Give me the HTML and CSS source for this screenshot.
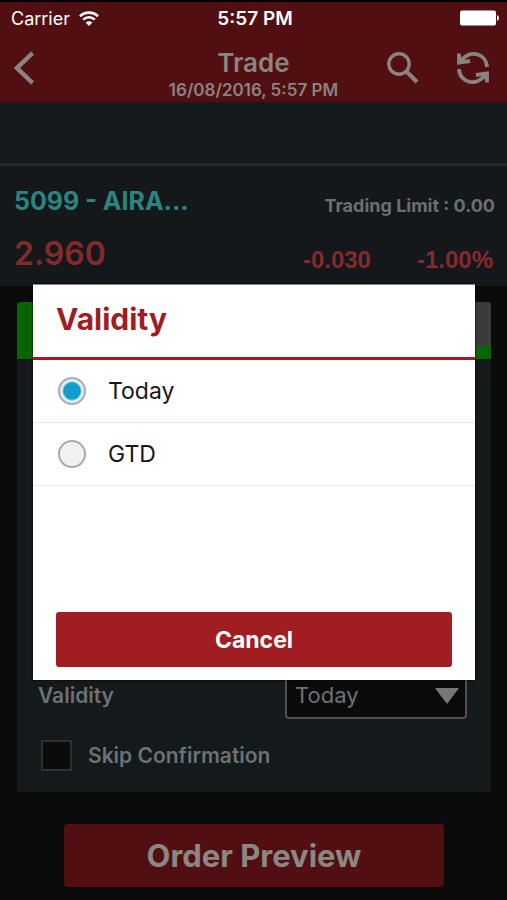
FILE: index.html
```html
<!DOCTYPE html>
<html lang="en">
<head>
<meta charset="utf-8">
<meta name="viewport" content="width=device-width, initial-scale=1">
<title>Trade</title>
<link rel="stylesheet" href="styles.css">
</head>
<body>
<div class="app">
  <header class="header">
    <div class="status">
      <div class="status-left">
        <span>Carrier</span>
        <svg class="wifi" viewBox="0 0 20 15" aria-hidden="true"><path d="M1 5.2C6 .4 14 .4 19 5.2M4.2 8.6c3.4-3.1 8.2-3.1 11.6 0" fill="none" stroke="#fff" stroke-width="2.600"/><path d="M10 15l-3.4-3.6c2-1.7 4.8-1.7 6.8 0z" fill="#fff"/></svg>
      </div>
      <span class="clock">5:57 PM</span>
      <svg class="battery" viewBox="0 0 39 16" aria-hidden="true"><rect x="0" y="0.500" width="36" height="15" rx="2" fill="#fff"/><path d="M37 5c2.600 1 2.600 5 0 6z" fill="#fff"/></svg>
    </div>
    <div class="navbar">
      <button class="icon-button back" aria-label="Back"><svg width="24" height="36" viewBox="0 0 24 36"><path d="M20.500 3L5 18l15.500 15" fill="none" stroke="currentColor" stroke-width="4.500"/></svg></button>
      <div class="heading">
        <h1>Trade</h1>
        <p>16/08/2016, 5:57 PM</p>
      </div>
      <div class="actions">
        <button class="icon-button" aria-label="Search"><svg width="32" height="32" viewBox="0 0 32 32"><circle cx="12" cy="12" r="10.200" fill="none" stroke="currentColor" stroke-width="3.400"/><path d="M19.500 19.500L30 30" stroke="currentColor" stroke-width="4"/></svg></button>
        <button class="icon-button" aria-label="Refresh"><svg width="32" height="32" viewBox="0 0 32 32"><g fill="none" stroke="currentColor" stroke-width="3.800"><path d="M4.500 8.500C11-2 29 0 30 15"/><path d="M27.500 23.500C21 34 3 32 2 17"/><path d="M2 1.500V10.500L13 9M30 30.500V21.500L19 23"/></g><path d="M2 3l7 6-7 3zM30 29l-7-6 7-3z" fill="currentColor"/></svg></button>
      </div>
    </div>
  </header>
  <div class="ticker"></div>
  <section class="quote">
    <div class="quote-row">
      <h2>5099 - AIRA...</h2>
      <span class="limit">Trading Limit : 0.00</span>
    </div>
    <div class="quote-row prices">
      <strong class="price">2.960</strong>
      <div class="changes"><span>-0.030</span><span>-1.00%</span></div>
    </div>
  </section>
  <main class="main">
    <form class="card">
      <div class="tabs"><div class="tab active"></div><div class="tab"></div></div>
      <div class="fields">
        <div class="field">
          <label for="validity">Validity</label>
          <div class="select-box">
            <select id="validity"><option>Today</option><option>GTD</option></select>
            <svg class="arrow" viewBox="0 0 24 16" aria-hidden="true"><path d="M0 0h24L12 16z" fill="currentColor"/></svg>
          </div>
        </div>
        <div class="check">
          <input type="checkbox" id="skip">
          <label for="skip">Skip Confirmation</label>
        </div>
      </div>
    </form>
    <button class="preview">Order Preview</button>
  </main>
  <div class="overlay">
    <div class="dialog" role="dialog" aria-labelledby="dialog-title">
      <h2 id="dialog-title">Validity</h2>
      <label class="option"><input type="radio" name="term" checked><span>Today</span></label>
      <label class="option"><input type="radio" name="term"><span>GTD</span></label>
      <button class="cancel">Cancel</button>
    </div>
  </div>
</div>
</body>
</html>
```
FILE: styles.css
```css
* { box-sizing: border-box; }
body { margin: 0; background: #0b0b0b; font-family: Inter, "Liberation Sans", sans-serif; }
h1, h2, p { margin: 0; }
button { border: 0; padding: 0; font-family: inherit; }
svg { display: block; }

.app { position: relative; display: flex; flex-direction: column; min-height: 100vh; border-top: 2px solid #000; }

.header { background: #520f12; color: #8b8380; height: 100px; }
.status { display: grid; grid-template-columns: 1fr auto 1fr; align-items: center; height: 32px; padding: 0 8px 0 11px; color: #fff; font-size: 18px; }
.status-left { display: flex; align-items: center; gap: 9px; }
.wifi { width: 20px; height: 15px; }
.clock { font-size: 19px; font-weight: 600; }
.battery { width: 39px; height: 16px; justify-self: end; }
.navbar { display: grid; grid-template-columns: 1fr auto 1fr; align-items: center; padding: 0 18px; height: 68px; }
.icon-button { display: flex; background: none; color: inherit; }
.back { margin-left: -6px; }
.heading { display: flex; flex-direction: column; align-items: center; padding-top: 12px; }
.heading h1 { font-size: 26px; line-height: 32px; font-weight: 600; }
.heading p { font-size: 17px; line-height: 22px; font-weight: 600; }
.actions { display: flex; justify-content: flex-end; gap: 38px; }

.ticker { height: 64px; background: #14191c; border-bottom: 3px solid #23282b; }
.quote { height: 120px; padding: 16px 12px 0 14px; background: #14181b; }
.quote-row { display: flex; justify-content: space-between; align-items: center; height: 38px; }
.quote h2 { font-size: 25px; font-weight: 700; color: #2a8582; }
.limit { padding-top: 8px; font-size: 18px; font-weight: 700; color: #6b6f71; }
.prices { height: 66px; color: #842a2c; }
.price { font-size: 32px; font-weight: 600; }
.changes { display: flex; gap: 46px; padding: 14px 2px 0 0; font-family: "Liberation Sans", sans-serif; font-size: 24px; font-weight: 700; }

.main { flex: 1; display: flex; flex-direction: column; gap: 32px; padding: 16px 16px 13px 17px; }
.card { flex: 1; display: flex; flex-direction: column; justify-content: space-between; background: #14191c; }
.tabs { display: grid; grid-template-columns: 1fr 1fr; height: 57px; border-radius: 4px 4px 0 0; overflow: hidden; background: #0b0b0b; }
.tab { background: #3b3b3b; border-bottom: 13px solid #096500; }
.tab.active { background: #096500; }
.fields { padding: 0 24px 21px 21px; font-size: 21px; font-weight: 600; color: #6d7173; }
.field { display: flex; justify-content: space-between; align-items: center; margin-bottom: 21px; }
.select-box { position: relative; width: 182px; }
.select-box select { display: block; appearance: none; width: 100%; height: 48px; padding: 0 8px; border: 2px solid #4d5052; border-radius: 4px; background: #0b0b0b; color: #6d7173; font-family: inherit; font-size: 22px; }
.arrow { position: absolute; right: 8px; top: 17px; width: 24px; height: 16px; color: #777; pointer-events: none; }
.check { display: flex; align-items: center; gap: 16px; padding-left: 3px; }
.check input { appearance: none; width: 31px; height: 31px; margin: 0; border: 2px solid #2c3032; background: #0b0b0b; }
.preview { height: 63px; margin: 0 47px; border-radius: 4px; background: #520f12; color: #8b8785; font-size: 31px; font-weight: 700; }

.overlay { position: absolute; inset: 0; display: flex; justify-content: center; align-items: flex-start; padding: 282px 32px 0 33px; }
.dialog { display: flex; flex-direction: column; width: 100%; min-height: 396px; padding-bottom: 13px; border-top: 1px solid #858789; background: #fff; box-shadow: 0 0 2px #000; }
.dialog h2 { height: 75px; padding: 14px 23px 0; border-bottom: 3px solid #a01d22; color: #a01d22; font-size: 30px; line-height: 40px; font-weight: 700; }
.option { display: flex; align-items: center; gap: 22px; height: 63px; padding: 0 25px; border-bottom: 1px solid #e5e6e7; color: #161616; font-size: 23px; }
.option input { appearance: none; width: 28px; height: 28px; margin: 0; border: 2px solid #a9abac; border-radius: 50%; background: #f2f2f2; }
.option input:checked { background: radial-gradient(circle, #109bcb 8px, #dff1f7 10px); }
.cancel { height: 55px; margin: auto 23px 0; border-radius: 3px; background: #a01d22; color: #fff; font-size: 23px; font-weight: 700; }
```
